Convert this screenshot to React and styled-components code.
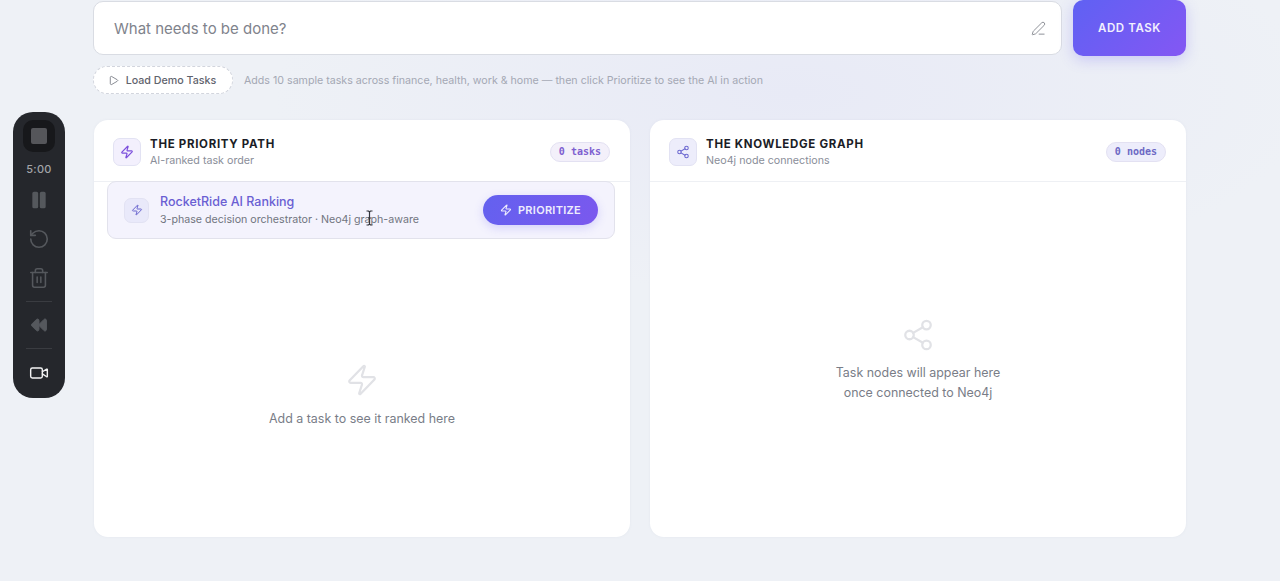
import styled, { createGlobalStyle } from 'styled-components';
import { Zap, Share2, Play, Pause, RotateCcw, Trash2, Rewind, Video, PenLine } from 'lucide-react';

const GlobalStyle = createGlobalStyle`
   html, body {
      margin: 0;
      padding: 0;
      height: 100%;
   }
   body {
      font-family: Inter, "Liberation Sans", sans-serif;
      background: #eef1f6;
      overflow: hidden;
   }
`;

const Page = styled.div`
   width: 1280px;
   height: 581px;
   box-sizing: border-box;
   padding: 0 94px 0 93px;
   background: radial-gradient(ellipse 520px 200px at 62% 16%, #e8eaf6 0%, #eef1f6 100%);
   position: relative;
   overflow: hidden;
`;

const InputRow = styled.div`
   display: flex;
   align-items: center;
   gap: 11px;
   height: 56px;
`;

const InputBox = styled.div`
   flex: 1;
   height: 54px;
   box-sizing: border-box;
   display: flex;
   align-items: center;
   justify-content: space-between;
   padding: 0 15px 0 20px;
   background: #fff;
   border: 1px solid #d9dce3;
   border-radius: 10px;
   font-size: 15px;
   color: #7f838c;
   svg {
      color: #8f9299;
   }
`;

const AddButton = styled.button`
   width: 113px;
   height: 56px;
   border: none;
   border-radius: 10px;
   background: linear-gradient(135deg, #5f61f3, #8457f3);
   color: #f2f0fe;
   font: 600 11.5px Inter, sans-serif;
   letter-spacing: 0.6px;
   box-shadow: 0 4px 14px rgba(99, 91, 243, 0.25);
`;

const DemoRow = styled.div`
   display: flex;
   align-items: center;
   gap: 11px;
   margin-top: 10px;
   height: 28px;
`;

const DemoButton = styled.div`
   box-sizing: border-box;
   width: 140px;
   height: 28px;
   padding-right: 2px;
   display: flex;
   align-items: center;
   justify-content: center;
   gap: 7px;
   background: #fff;
   border: 1px dashed #d2d5dd;
   border-radius: 14px;
   font-size: 10.7px;
   font-weight: 500;
   color: #5f636d;
`;

const DemoHint = styled.span`
   font-size: 10.65px;
   color: #a4a8b4;
`;

const Panels = styled.div`
   display: grid;
   grid-template-columns: 536px 536px;
   gap: 20px;
   margin: 26px 0 0 1px;
`;

const Panel = styled.section`
   height: 417px;
   display: flex;
   flex-direction: column;
   background: #fff;
   border-radius: 14px;
   box-shadow: 0 0 3px rgba(120, 125, 150, 0.08);
`;

const PanelHeader = styled.header`
   height: 62px;
   flex-shrink: 0;
   box-sizing: border-box;
   display: flex;
   align-items: center;
   gap: 9px;
   padding: 2px 20px 0 19px;
   border-bottom: 1px solid #eef0f4;
`;

const IconTile = styled.div`
   width: ${(p) => p.$size}px;
   height: ${(p) => p.$size}px;
   flex-shrink: 0;
   box-sizing: border-box;
   display: flex;
   align-items: center;
   justify-content: center;
   border-radius: 7px;
   color: ${(p) => p.$color};
   background: ${(p) => p.$bg};
   border: 1px solid #e2e2f3;
`;

const Titles = styled.div`
   flex: 1;
   display: flex;
   flex-direction: column;
   gap: 2px;
   padding-top: 2px;
`;

const Title = styled.h2`
   margin: 0;
   font-size: 11.5px;
   line-height: 15px;
   font-weight: 700;
   letter-spacing: 0.7px;
   color: #1b1d26;
`;

const Subtitle = styled.p`
   margin: 0;
   font-size: 10.7px;
   line-height: 14px;
   color: #8a8e99;
`;

const CountBadge = styled.span`
   box-sizing: border-box;
   height: 20px;
   padding: 0 8px;
   display: flex;
   align-items: center;
   border-radius: 10px;
   font: 700 10px "DejaVu Sans Mono", "Liberation Mono", monospace;
   color: ${(p) => p.$color};
   background: ${(p) => p.$bg};
   border: 1px solid #e3e1f2;
`;

const RankingBar = styled.div`
   box-sizing: border-box;
   height: 58px;
   margin: -1px 15px 0 13px;
   display: flex;
   align-items: center;
   gap: 11px;
   padding: 0 16px 0 16px;
   background: #f4f3fd;
   border: 1px solid #e2e2ec;
   border-radius: 9px;
   position: relative;
`;

const RankingText = styled.div`
   flex: 1;
   display: flex;
   flex-direction: column;
   gap: 3px;
   padding-top: 1px;
`;

const RankingTitle = styled.div`
   font-size: 12.5px;
   line-height: 16px;
   font-weight: 500;
   color: #6a5fd3;
`;

const RankingSub = styled.div`
   font-size: 10.65px;
   line-height: 14px;
   color: #71757f;
`;

const PrioritizeButton = styled.button`
   width: 115px;
   height: 30px;
   display: flex;
   align-items: center;
   justify-content: center;
   gap: 6px;
   border: none;
   border-radius: 15px;
   background: linear-gradient(120deg, #6361ef, #7b58ee);
   color: #eeedfd;
   font: 600 11px Inter, sans-serif;
   letter-spacing: 0.3px;
   box-shadow: 0 3px 10px rgba(99, 91, 243, 0.22);
`;

const TextCursor = styled.svg`
   position: absolute;
   left: 257px;
   top: 28px;
   color: #33353c;
`;

const Empty = styled.div`
   flex: 1;
   display: flex;
   flex-direction: column;
   align-items: center;
   justify-content: center;
   margin-top: ${(p) => p.$top}px;
   color: #e1e2e6;
`;

const EmptyText = styled.p`
   margin: ${(p) => p.$gap}px 0 0;
   font-size: 12.45px;
   line-height: 20px;
   color: #797d87;
   text-align: center;
`;

const Recorder = styled.aside`
   position: absolute;
   left: 13px;
   top: 112px;
   width: 52px;
   height: 286px;
   box-sizing: border-box;
   padding-top: 8px;
   display: flex;
   flex-direction: column;
   align-items: center;
   background: #25272c;
   border-radius: 20px;
   color: #55585d;
`;

const StopWell = styled.div`
   width: 32px;
   height: 32px;
   display: flex;
   align-items: center;
   justify-content: center;
   border-radius: 10px;
   background: #17181b;
`;

const StopSquare = styled.div`
   width: 16px;
   height: 16px;
   border-radius: 2px;
   background: #55565a;
`;

const Timer = styled.div`
   margin-top: 10px;
   font-size: 11px;
   line-height: 14px;
   font-weight: 500;
   color: #a2a4a8;
   letter-spacing: 0.3px;
`;

const RecorderItem = styled.div`
   height: ${(p) => p.$h}px;
   margin-top: ${(p) => p.$mt}px;
   display: flex;
   align-items: center;
   justify-content: center;
   color: ${(p) => p.$color || 'inherit'};
`;

const Divider = styled.div`
   width: 26px;
   height: 1px;
   margin-top: ${(p) => p.$mt}px;
   background: #3a3c41;
`;

const App = () => (
   <Page>
      <GlobalStyle />
      <Recorder>
         <StopWell>
            <StopSquare />
         </StopWell>
         <Timer>5:00</Timer>
         <RecorderItem $h={20} $mt={14}>
            <Pause size={20} fill="currentColor" strokeWidth={2} />
         </RecorderItem>
         <RecorderItem $h={20} $mt={19}>
            <RotateCcw size={22} strokeWidth={1.8} />
         </RecorderItem>
         <RecorderItem $h={20} $mt={19}>
            <Trash2 size={22} strokeWidth={1.7} />
         </RecorderItem>
         <Divider $mt={13} />
         <RecorderItem $h={20} $mt={13}>
            <Rewind size={18} fill="currentColor" strokeWidth={1.2} />
         </RecorderItem>
         <Divider $mt={13} />
         <RecorderItem $h={20} $mt={14} $color="#f3f3f4">
            <Video size={20} strokeWidth={1.7} />
         </RecorderItem>
      </Recorder>

      <InputRow>
         <InputBox>
            What needs to be done?
            <PenLine size={15} strokeWidth={1.6} />
         </InputBox>
         <AddButton>ADD TASK</AddButton>
      </InputRow>

      <DemoRow>
         <DemoButton>
            <Play size={11} strokeWidth={1.6} />
            Load Demo Tasks
         </DemoButton>
         <DemoHint>
            Adds 10 sample tasks across finance, health, work &amp; home — then click Prioritize to see the AI in action
         </DemoHint>
      </DemoRow>

      <Panels>
         <Panel>
            <PanelHeader>
               <IconTile $size={28} $color="#7c4fdc" $bg="#f3f0fd">
                  <Zap size={14} strokeWidth={2} />
               </IconTile>
               <Titles>
                  <Title>THE PRIORITY PATH</Title>
                  <Subtitle>AI-ranked task order</Subtitle>
               </Titles>
               <CountBadge $color="#7e5fd0" $bg="#f3f0fa">0 tasks</CountBadge>
            </PanelHeader>
            <RankingBar>
               <IconTile $size={25} $color="#6a66cf" $bg="#e9e9fa">
                  <Zap size={12} strokeWidth={2} />
               </IconTile>
               <RankingText>
                  <RankingTitle>RocketRide AI Ranking</RankingTitle>
                  <RankingSub>3-phase decision orchestrator · Neo4j graph-aware</RankingSub>
               </RankingText>
               <PrioritizeButton>
                  <Zap size={12} strokeWidth={2.2} />
                  PRIORITIZE
               </PrioritizeButton>
               <TextCursor width="9" height="16" viewBox="0 0 9 16" fill="none" stroke="currentColor" strokeWidth="1.2">
                  <path d="M1.5 1h2l1 1 1-1h2M4.5 2v12M1.5 15h2l1-1 1 1h2M3 8h3" />
               </TextCursor>
            </RankingBar>
            <Empty $top={16}>
               <Zap size={34} strokeWidth={1.6} />
               <EmptyText $gap={12}>Add a task to see it ranked here</EmptyText>
            </Empty>
         </Panel>

         <Panel>
            <PanelHeader>
               <IconTile $size={28} $color="#6a66cf" $bg="#ededfb">
                  <Share2 size={14} strokeWidth={1.8} />
               </IconTile>
               <Titles>
                  <Title>THE KNOWLEDGE GRAPH</Title>
                  <Subtitle>Neo4j node connections</Subtitle>
               </Titles>
               <CountBadge $color="#6c68c4" $bg="#ededfb">0 nodes</CountBadge>
            </PanelHeader>
            <Empty $top={1}>
               <Share2 size={34} strokeWidth={1.6} />
               <EmptyText $gap={11}>
                  Task nodes will appear here
                  <br />
                  once connected to Neo4j
               </EmptyText>
            </Empty>
         </Panel>
      </Panels>
   </Page>
);

export default App;
